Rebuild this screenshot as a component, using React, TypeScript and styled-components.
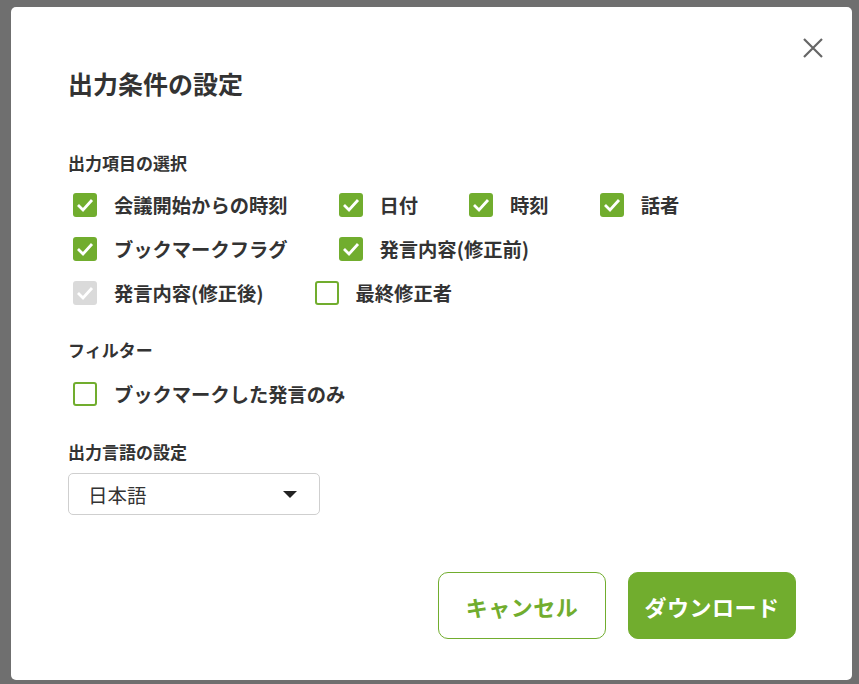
import React from 'react';
import styled, { createGlobalStyle } from 'styled-components';

const GREEN = '#71ad2e';

const GlobalStyle = createGlobalStyle`
    html, body {
        margin: 0;
        padding: 0;
        background: #6f6f6f;
    }
    body {
        font-family: 'Noto Sans CJK JP', 'Noto Sans', sans-serif;
        color: #333;
    }
`;

const Overlay = styled.div`
    width: 859px;
    height: 684px;
    box-sizing: border-box;
    padding: 7px 7px 4px 11px;
`;

const Dialog = styled.div`
    position: relative;
    box-sizing: border-box;
    height: 100%;
    background: #fff;
    border-radius: 5px;
    padding: 60px 56px 0 57px;
    display: flex;
    flex-direction: column;
`;

const Title = styled.h1`
    margin: 0;
    font-size: 25px;
    line-height: 32px;
    font-weight: 700;
    color: #333;
`;

const Close = styled.button`
    position: absolute;
    top: 24px;
    right: 22px;
    width: 34px;
    height: 34px;
    padding: 0;
    border: 0;
    background: none;
    display: flex;
    align-items: center;
    justify-content: center;
`;

const SectionLabel = styled.div<{ $top: number }>`
    margin-top: ${(p) => p.$top}px;
    font-size: 17px;
    line-height: 22px;
    font-weight: 700;
    color: #333;
`;

const Options = styled.div<{ $top: number }>`
    margin-top: ${(p) => p.$top}px;
    display: flex;
    flex-direction: column;
`;

const Row = styled.div`
    height: 44px;
    display: flex;
    align-items: center;
    gap: 51px;
    padding-left: 5px;
`;

const Item = styled.label`
    display: flex;
    align-items: center;
    gap: 17px;
    font-size: 19.3px;
    font-weight: 700;
    color: #333;
    white-space: nowrap;
`;

const Box = styled.span<{ $state: 'on' | 'off' | 'disabled' }>`
    box-sizing: border-box;
    width: 24px;
    height: 24px;
    border-radius: 3px;
    display: flex;
    align-items: center;
    justify-content: center;
    background: ${(p) => (p.$state === 'on' ? GREEN : p.$state === 'disabled' ? '#dadada' : '#fff')};
    border: ${(p) => (p.$state === 'off' ? `2.5px solid ${GREEN}` : 'none')};
`;

const Select = styled.div`
    margin-top: 10px;
    box-sizing: border-box;
    width: 252px;
    height: 42px;
    border: 1px solid #cfcfcf;
    border-radius: 5px;
    padding: 0 22px 0 19px;
    display: flex;
    align-items: center;
    justify-content: space-between;
    font-size: 19.5px;
    color: #333;
`;

const Arrow = styled.span`
    width: 0;
    height: 0;
    border-left: 7px solid transparent;
    border-right: 7px solid transparent;
    border-top: 7px solid #222;
`;

const Footer = styled.div`
    margin-top: 57px;
    display: flex;
    justify-content: flex-end;
    gap: 22px;
`;

const Button = styled.button<{ $primary?: boolean }>`
    box-sizing: border-box;
    width: 168px;
    height: 67px;
    border-radius: 10px;
    font-family: 'Noto Sans CJK JP', 'Noto Sans', sans-serif;
    font-size: 22px;
    font-weight: 700;
    letter-spacing: 0.5px;
    border: 1px solid ${GREEN};
    background: ${(p) => (p.$primary ? GREEN : '#fff')};
    color: ${(p) => (p.$primary ? '#fff' : GREEN)};
`;

type State = 'on' | 'off' | 'disabled';

const Check = ({ state, label }: { state: State; label: string }) => (
    <Item>
        <Box $state={state}>
            {state !== 'off' && (
                <svg width="24" height="24" viewBox="0 0 24 24">
                    <polyline points="5,12 10,17 19,7" fill="none" stroke="#fff" strokeWidth="2.8" />
                </svg>
            )}
        </Box>
        {label}
    </Item>
);

const rows: [State, string][][] = [
    [
        ['on', '会議開始からの時刻'],
        ['on', '日付'],
        ['on', '時刻'],
        ['on', '話者'],
    ],
    [
        ['on', 'ブックマークフラグ'],
        ['on', '発言内容(修正前)'],
    ],
    [
        ['disabled', '発言内容(修正後)'],
        ['off', '最終修正者'],
    ],
];

export default function App() {
    return (
        <Overlay>
            <GlobalStyle />
            <Dialog>
                <Close aria-label="close">
                    <svg width="22" height="22" viewBox="0 0 22 22">
                        <path d="M2 2 L20 20 M20 2 L2 20" stroke="#666" strokeWidth="2.2" />
                    </svg>
                </Close>
                <Title>出力条件の設定</Title>

                <SectionLabel $top={53}>出力項目の選択</SectionLabel>
                <Options $top={9}>
                    {rows.map((row, i) => (
                        <Row key={i}>
                            {row.map(([s, l]) => (
                                <Check key={l} state={s} label={l} />
                            ))}
                        </Row>
                    ))}
                </Options>

                <SectionLabel $top={24}>フィルター</SectionLabel>
                <Options $top={11}>
                    <Row>
                        <Check state="off" label="ブックマークした発言のみ" />
                    </Row>
                </Options>

                <SectionLabel $top={25}>出力言語の設定</SectionLabel>
                <Select>
                    日本語
                    <Arrow />
                </Select>

                <Footer>
                    <Button>キャンセル</Button>
                    <Button $primary>ダウンロード</Button>
                </Footer>
            </Dialog>
        </Overlay>
    );
}
